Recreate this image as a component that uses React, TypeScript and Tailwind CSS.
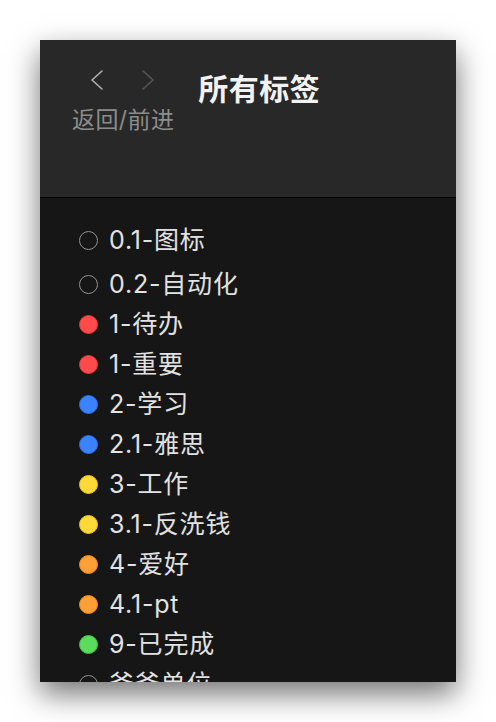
const tags = [
  { name: "0.1-图标", color: null },
  { name: "0.2-自动化", color: null },
  { name: "1-待办", color: "bg-[#ff4b4b] border-[#e23a3a]" },
  { name: "1-重要", color: "bg-[#ff4b4b] border-[#e23a3a]" },
  { name: "2-学习", color: "bg-[#3b82ff] border-[#2f6fe0]" },
  { name: "2.1-雅思", color: "bg-[#3b82ff] border-[#2f6fe0]" },
  { name: "3-工作", color: "bg-[#ffd93a] border-[#e8be22]" },
  { name: "3.1-反洗钱", color: "bg-[#ffd93a] border-[#e8be22]" },
  { name: "4-爱好", color: "bg-[#ffa036] border-[#e68a22]" },
  { name: "4.1-pt", color: "bg-[#ffa036] border-[#e68a22]" },
  { name: "9-已完成", color: "bg-[#5cdc5c] border-[#46c046]" },
  { name: "爸爸单位", color: null },
];

function Chevron({ dir, className }: { dir: "left" | "right"; className: string }) {
  return (
    <svg width="13" height="20" viewBox="0 0 13 20" fill="none" className={className}>
      <path
        d={dir === "left" ? "M12 1 L2 10 L12 19" : "M1 1 L11 10 L1 19"}
        stroke="currentColor"
        strokeWidth="1.6"
        strokeLinecap="round"
        strokeLinejoin="round"
      />
    </svg>
  );
}

export default function App() {
  return (
    <div
      className="min-h-screen bg-white p-10"
      style={{ fontFamily: 'Inter, "Noto Sans CJK SC", sans-serif' }}
    >
      <div className="flex h-[642px] w-[416px] flex-col overflow-hidden bg-[#161616] shadow-[0_12px_28px_rgba(0,0,0,0.55)]">
        <div className="flex h-[158px] shrink-0 items-start border-b border-black bg-[#282828] pl-[32px] pt-[30px]">
          <div className="flex flex-col">
            <div className="ml-[18px] flex gap-[39px]">
              <Chevron dir="left" className="text-[#b0b0b0]" />
              <Chevron dir="right" className="text-[#565656]" />
            </div>
            <div className="mt-[14px] text-[23px] leading-[32px] tracking-[0.4px] text-[#8c8c8c]">
              返回/前进
            </div>
          </div>
          <div className="ml-[24px] mt-[1px] text-[30px] font-bold leading-[36px] tracking-[0.5px] text-[#f2f2f2]">
            所有标签
          </div>
        </div>
        <div className="flex flex-col pl-[39px] pt-[22px]">
          {tags.map((t, i) => (
            <div
              key={t.name}
              className={`flex h-[40px] shrink-0 items-center gap-[11px] ${i === 0 ? "mb-[4px]" : ""}`}
            >
              {t.color ? (
                <span className={`h-[19px] w-[19px] rounded-full border ${t.color}`} />
              ) : (
                <span className="h-[19px] w-[19px] rounded-full border-[1.8px] border-[#929292]" />
              )}
              <span className="text-[25px] leading-[30px] tracking-[0.8px] text-[#e2e2e2]">
                {t.name}
              </span>
            </div>
          ))}
        </div>
      </div>
    </div>
  );
}
